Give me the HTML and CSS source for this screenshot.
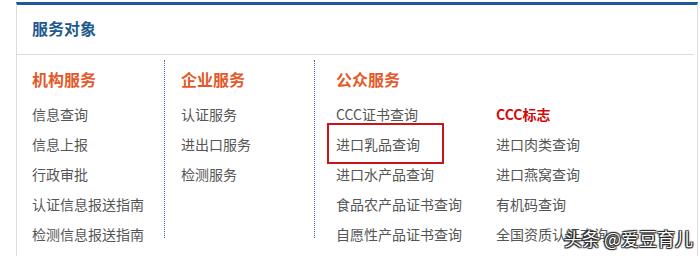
FILE: index.html
```html
<!DOCTYPE html>
<html lang="zh-CN">
<head>
<meta charset="utf-8">
<link rel="stylesheet" href="styles.css">
</head>
<body>
<div class="panel">
  <div class="panel-head">服务对象</div>
  <div class="panel-body">
    <div class="col col1">
      <h3 class="col-title">机构服务</h3>
      <ul class="list">
        <li>信息查询</li>
        <li>信息上报</li>
        <li>行政审批</li>
        <li>认证信息报送指南</li>
        <li>检测信息报送指南</li>
      </ul>
    </div>
    <div class="col col2">
      <h3 class="col-title">企业服务</h3>
      <ul class="list">
        <li>认证服务</li>
        <li>进出口服务</li>
        <li>检测服务</li>
      </ul>
    </div>
    <div class="col col3">
      <h3 class="col-title">公众服务</h3>
      <ul class="list grid2">
        <li>CCC证书查询</li>
        <li class="strong">CCC标志</li>
        <li><span class="marked">进口乳品查询</span></li>
        <li>进口肉类查询</li>
        <li>进口水产品查询</li>
        <li>进口燕窝查询</li>
        <li>食品农产品证书查询</li>
        <li>有机码查询</li>
        <li>自愿性产品证书查询</li>
        <li>全国资质认证查询</li>
      </ul>
    </div>
  </div>
</div>
<div class="watermark">头条 @爱豆育儿</div>
</body>
</html>
```
FILE: styles.css
```css
* { box-sizing: border-box; }
html, body { margin: 0; padding: 0; }
body {
  width: 700px;
  height: 256px;
  overflow: hidden;
  background: #fff;
  font-family: "Noto Sans CJK SC", "Microsoft YaHei", sans-serif;
  position: relative;
}
.panel {
  margin: 2px 0 0 16px;
  width: 682px;
  height: 260px;
  border-top: 3px solid #1d5b96;
  border-left: 1px solid #dcdcdc;
  border-right: 1px solid #dcdcdc;
}
.panel-head {
  height: 50px;
  padding-left: 15px;
  line-height: 46px;
  font-size: 16px;
  font-weight: 700;
  color: #1f5a8e;
  border-bottom: 1px solid #dcdcdc;
  margin-right: 3px;
}
.panel-body {
  display: flex;
  padding-top: 5px;
}
.col {
  height: 178px;
}
.col1 { width: 148px; padding-left: 15px; border-right: 1px dotted #3a6ea5; }
.col2 { width: 150px; padding-left: 16px; border-right: 1px dotted #3a6ea5; }
.col3 { flex: 1; padding-left: 21px; }
.col-title {
  margin: 4px 0 0;
  height: 30px;
  line-height: 30px;
  font-size: 16px;
  font-weight: 700;
  color: #e35a2a;
}
.list {
  list-style: none;
  margin: 5px 0 0;
  padding: 0;
}
.list li {
  height: 30px;
  line-height: 30px;
  font-size: 14px;
  color: #555;
  white-space: nowrap;
}
.grid2 {
  display: grid;
  grid-template-columns: 160px 1fr;
}
.list li.strong {
  color: #d30a0a;
  font-weight: 700;
}
.marked {
  position: relative;
  display: inline-block;
}
.marked::after {
  content: "";
  position: absolute;
  left: -9px;
  top: -6px;
  width: 113px;
  height: 37px;
  border: 2px solid #c9141c;
}
.watermark {
  position: absolute;
  left: 564px;
  top: 226px;
  font-size: 18px;
  line-height: 24px;
  color: #fff;
  font-family: "Noto Sans CJK SC", sans-serif;
  text-shadow: 0 0 1px #000, 0 0 1px #000, 1px 1px 1px #333, -1px -1px 1px #333, 1px -1px 1px #333, -1px 1px 1px #333;
}
```
